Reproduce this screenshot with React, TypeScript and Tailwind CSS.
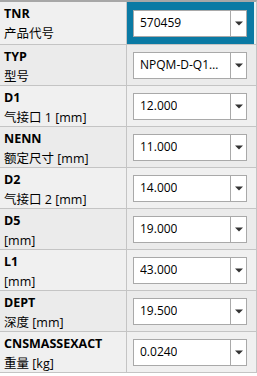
const rows = [
  { code: "TNR", label: "产品代号", value: "570459", active: true },
  { code: "TYP", label: "型号", value: "NPQM-D-Q12-E-P10" },
  { code: "D1", label: "气接口 1 [mm]", value: "12.000" },
  { code: "NENN", label: "额定尺寸 [mm]", value: "11.000" },
  { code: "D2", label: "气接口 2 [mm]", value: "14.000" },
  { code: "D5", label: "[mm]", value: "19.000" },
  { code: "L1", label: "[mm]", value: "43.000" },
  { code: "DEPT", label: "深度 [mm]", value: "19.500" },
  { code: "CNSMASSEXACT", label: "重量 [kg]", value: "0.0240" },
];

const Select = ({ value }: { value: string }) => (
  <div className="flex h-[27px] w-[114px] items-stretch border border-[#a9a9a9] bg-white">
    <div className="flex min-w-0 flex-1 items-center px-[6px]">
      <span className="truncate text-[12px] text-black">{value}</span>
    </div>
    <div className="flex w-[16px] items-center justify-center border-l border-[#a9a9a9]">
      <svg width="8" height="5" viewBox="0 0 8 5">
        <path d="M0 0.5h8L4 4.5z" fill="#333" />
      </svg>
    </div>
  </div>
);

export default function App() {
  return (
    <div
      className="h-[376px] w-[257px] overflow-hidden bg-white"
      style={{ fontFamily: '"Open Sans", "Noto Sans CJK SC", sans-serif' }}
    >
      <div className="border-t-2 border-r border-[#a7a7a7] border-r-[#c4c4c4]">
        {rows.map((r, i) => (
          <div
            key={r.code}
            className={`flex border-b border-[#c4c4c4] ${i === 0 ? "h-[43px]" : "h-[41px]"} ${
              i % 2 === 1 ? "bg-[#ebebeb]" : "bg-[#f0f0f0]"
            }`}
          >
            <div className="flex w-[127px] flex-col border-r border-[#c4c4c4] pl-[4px] pt-[2px] leading-[20px] text-black">
              <span className="text-[12.5px] font-bold">{r.code}</span>
              <span className="text-[12.5px]">{r.label}</span>
            </div>
            <div className="flex flex-1 pr-[2px]">
              {r.active ? (
                <div className="flex flex-1 items-center bg-[#0a7aa4] pl-[6px]">
                  <Select value={r.value} />
                </div>
              ) : (
                <div className="flex flex-1 items-center pl-[6px]">
                  <Select value={r.value} />
                </div>
              )}
            </div>
          </div>
        ))}
      </div>
    </div>
  );
}
